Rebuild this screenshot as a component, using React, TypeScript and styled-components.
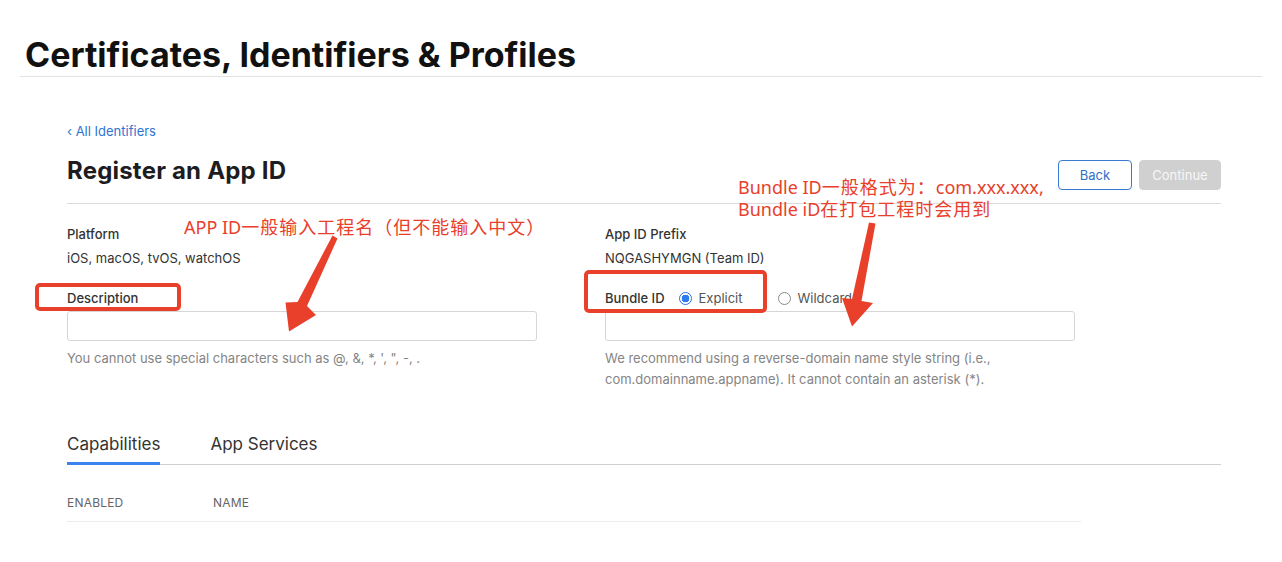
import React from "react";
import styled, { createGlobalStyle } from "styled-components";

const GlobalStyle = createGlobalStyle`
  html, body { margin: 0; padding: 0; background: #fff; }
  body { font-family: Inter, "Noto Sans", sans-serif; color: #333; }
  * { box-sizing: border-box; }
`;

const Page = styled.div`
  position: relative;
  width: 1282px;
  height: 562px;
  overflow: hidden;
`;

const Header = styled.header`
  margin: 0 20px;
  padding: 34px 0 0 5px;
  border-bottom: 1px solid #e2e2e2;
  height: 77px;
`;

const PageTitle = styled.h1`
  margin: 0;
  font-size: 34px;
  line-height: 42px;
  font-weight: 700;
  color: #111;
`;

const Main = styled.main`
  padding: 46px 61px 0 67px;
`;

const BackLink = styled.a`
  display: block;
  font-size: 13px;
  line-height: 16px;
  color: #2f76d2;
  text-decoration: none;
`;

const TitleRow = styled.div`
  display: flex;
  align-items: flex-start;
  justify-content: space-between;
  margin-top: 21px;
  padding-bottom: 13px;
  border-bottom: 1px solid #dcdcdc;
`;

const SectionTitle = styled.h2`
  margin: 0;
  font-size: 24px;
  line-height: 22px;
  font-weight: 700;
  color: #1d1d1f;
  letter-spacing: 0.2px;
`;

const Buttons = styled.div`
  display: flex;
  gap: 7px;
`;

const Button = styled.button<{ $primary?: boolean }>`
  height: 30px;
  padding: 0;
  width: ${(p) => (p.$primary ? "82px" : "74px")};
  border-radius: 4px;
  font-family: inherit;
  font-size: 13px;
  border: 1px solid ${(p) => (p.$primary ? "#d0d0d0" : "#3a7bd0")};
  background: ${(p) => (p.$primary ? "#d0d0d0" : "#fff")};
  color: ${(p) => (p.$primary ? "#f7f7f7" : "#2f6fc6")};
`;

const FormGrid = styled.div`
  display: grid;
  grid-template-columns: 470px 470px;
  column-gap: 68px;
  padding-top: 22px;
`;

const Column = styled.div`
  display: flex;
  flex-direction: column;
`;

const Label = styled.div`
  font-size: 13px;
  line-height: 16px;
  font-weight: 500;
  color: #333;
`;

const Value = styled.div`
  margin-top: 8px;
  font-size: 13px;
  line-height: 16px;
  color: #333;
`;

const FieldLabelRow = styled.div`
  display: flex;
  align-items: center;
  margin-top: 24px;
  height: 16px;
`;

const RadioOption = styled.label`
  display: flex;
  align-items: center;
  margin-left: 14px;
  font-size: 13px;
  color: #555;
  & + & {
    margin-left: 35px;
  }
`;

const RadioDot = styled.span<{ $checked?: boolean }>`
  display: inline-block;
  width: 13px;
  height: 13px;
  border-radius: 50%;
  margin-right: 7px;
  border: ${(p) => (p.$checked ? "1px solid #2a6fe0" : "1px solid #8a8a8a")};
  background: ${(p) =>
    p.$checked ? "radial-gradient(circle, #2f7bf0 0 3.6px, #fff 4.1px)" : "#fff"};
`;

const Input = styled.div`
  margin-top: 5px;
  height: 30px;
  border: 1px solid #d6d6d6;
  border-radius: 3px;
  background: #fff;
`;

const Help = styled.div`
  margin-top: 7px;
  font-size: 13px;
  line-height: 21px;
  color: #858585;
`;

const Tabs = styled.div`
  display: flex;
  gap: 50px;
  margin-top: 43px;
  border-bottom: 1px solid #cfcfcf;
`;

const Tab = styled.div<{ $active?: boolean }>`
  font-size: 17px;
  line-height: 22px;
  font-weight: 400;
  color: #333;
  padding-bottom: 7px;
  margin-bottom: -1px;
  border-bottom: 3px solid ${(p) => (p.$active ? "#3b82ee" : "transparent")};
`;

const TableHead = styled.div`
  display: flex;
  width: 1014px;
  margin-top: 30px;
  padding-bottom: 10px;
  border-bottom: 1px solid #ececec;
`;

const HeadCell = styled.div<{ $w?: number }>`
  width: ${(p) => (p.$w ? `${p.$w}px` : "auto")};
  font-size: 12px;
  line-height: 16px;
  color: #666;
  letter-spacing: 0.2px;
`;

const Note = styled.div<{ $x: number; $y: number }>`
  position: absolute;
  left: ${(p) => p.$x}px;
  top: ${(p) => p.$y}px;
  font-family: "Noto Sans", "Noto Sans CJK SC", sans-serif;
  font-size: 18px;
  line-height: 22px;
  color: #e8402b;
  white-space: nowrap;
`;

const Cjk = styled.span`
  letter-spacing: 1px;
`;

const Highlight = styled.div<{ $x: number; $y: number; $w: number; $h: number }>`
  position: absolute;
  left: ${(p) => p.$x}px;
  top: ${(p) => p.$y}px;
  width: ${(p) => p.$w}px;
  height: ${(p) => p.$h}px;
  border: 4px solid #e8402b;
  border-radius: 5px;
`;

const Overlay = styled.svg`
  position: absolute;
  left: 0;
  top: 0;
  pointer-events: none;
`;

export default function App() {
  return (
    <Page>
      <GlobalStyle />
      <Header>
        <PageTitle>Certificates, Identifiers &amp; Profiles</PageTitle>
      </Header>
      <Main>
        <BackLink href="#">‹ All Identifiers</BackLink>
        <TitleRow>
          <SectionTitle>Register an App ID</SectionTitle>
          <Buttons>
            <Button>Back</Button>
            <Button $primary>Continue</Button>
          </Buttons>
        </TitleRow>
        <FormGrid>
          <Column>
            <Label>Platform</Label>
            <Value>iOS, macOS, tvOS, watchOS</Value>
            <FieldLabelRow>
              <Label>Description</Label>
            </FieldLabelRow>
            <Input />
            <Help>You cannot use special characters such as @, &amp;, *, ', ", -, .</Help>
          </Column>
          <Column>
            <Label>App ID Prefix</Label>
            <Value>NQGASHYMGN (Team ID)</Value>
            <FieldLabelRow>
              <Label>Bundle ID</Label>
              <RadioOption>
                <RadioDot $checked />
                Explicit
              </RadioOption>
              <RadioOption>
                <RadioDot />
                Wildcard
              </RadioOption>
            </FieldLabelRow>
            <Input />
            <Help>
              We recommend using a reverse-domain name style string (i.e.,
              <br />
              com.domainname.appname). It cannot contain an asterisk (*).
            </Help>
          </Column>
        </FormGrid>
        <Tabs>
          <Tab $active>Capabilities</Tab>
          <Tab>App Services</Tab>
        </Tabs>
        <TableHead>
          <HeadCell $w={146}>ENABLED</HeadCell>
          <HeadCell>NAME</HeadCell>
        </TableHead>
      </Main>

      <Note $x={184} $y={216}>
        APP ID<Cjk>一般输入工程名（但不能输入中文）</Cjk>
      </Note>
      <Note $x={738} $y={176}>
        Bundle ID<Cjk>一般格式为：</Cjk>com.xxx.xxx,
        <br />
        Bundle iD<Cjk>在打包工程时会用到</Cjk>
      </Note>
      <Highlight $x={35} $y={283} $w={146} $h={28} />
      <Highlight $x={584} $y={270} $w={183} $h={43} />
      <Overlay width="1282" height="562" viewBox="0 0 1282 562">
        <polygon
          fill="#e8402b"
          points="332.5,235.5 297.5,302 285.5,302.5 289,331.5 316,315 307,306 337.5,238.5"
        />
        <polygon
          fill="#e8402b"
          points="869,222.5 852,299 842,298 852,326.5 873,303 861.5,301 875.5,223.5"
        />
      </Overlay>
    </Page>
  );
}
